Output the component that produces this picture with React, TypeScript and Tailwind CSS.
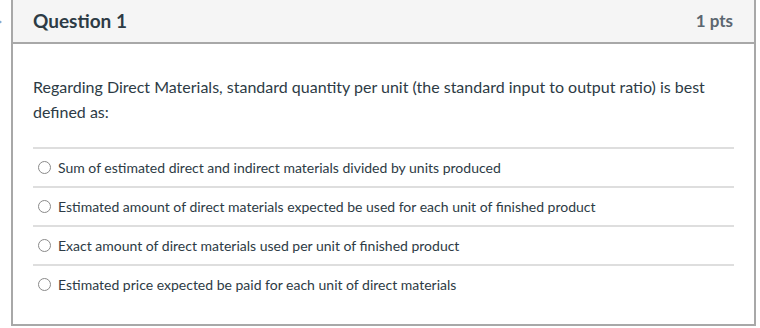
import React from "react";

const answers = [
  "Sum of estimated direct and indirect materials divided by units produced",
  "Estimated amount of direct materials expected be used for each unit of finished product",
  "Exact amount of direct materials used per unit of finished product",
  "Estimated price expected be paid for each unit of direct materials",
];

export default function App() {
  return (
    <div
      className="relative w-[760px] h-[328px] overflow-hidden bg-white text-[#2d3b45]"
      style={{ fontFamily: "Lato, 'Open Sans', sans-serif" }}
    >
      <div className="absolute left-[-3px] top-[18px] w-0 h-0 border-y-[4px] border-y-transparent border-l-[5px] border-l-[#7eaad3]" />
      <div className="ml-[11px] w-[745px] h-[326px] border-2 border-t-0 border-[#a8a8a8] flex flex-col">
        <div className="h-[44px] bg-[#f5f5f5] border-b-2 border-[#a8a8a8] flex items-center justify-between pl-[20px] pr-[21px] shrink-0">
          <span className="text-[19px] font-bold text-[#2d3b45]">Question 1</span>
          <span className="text-[17px] font-bold text-[#5b6670]">1 pts</span>
        </div>
        <div className="pl-[20px] pr-[20px] pt-[30px]">
          <p className="text-[16px] leading-[25px] text-[#2d3b45]">
            Regarding Direct Materials, standard quantity per unit (the standard input to output ratio) is best defined as:
          </p>
          <div className="mt-[23px] w-[701px]">
            {answers.map((a, i) => (
              <div
                key={i}
                className="h-[39px] border-t-2 border-[#dedede] flex items-center pl-[5px] gap-[7px]"
              >
                <span className="w-[13px] h-[13px] rounded-full border border-[#8a8a8a] bg-white shrink-0" />
                <span className="text-[14px] text-[#2d3b45]">{a}</span>
              </div>
            ))}
          </div>
        </div>
      </div>
    </div>
  );
}
